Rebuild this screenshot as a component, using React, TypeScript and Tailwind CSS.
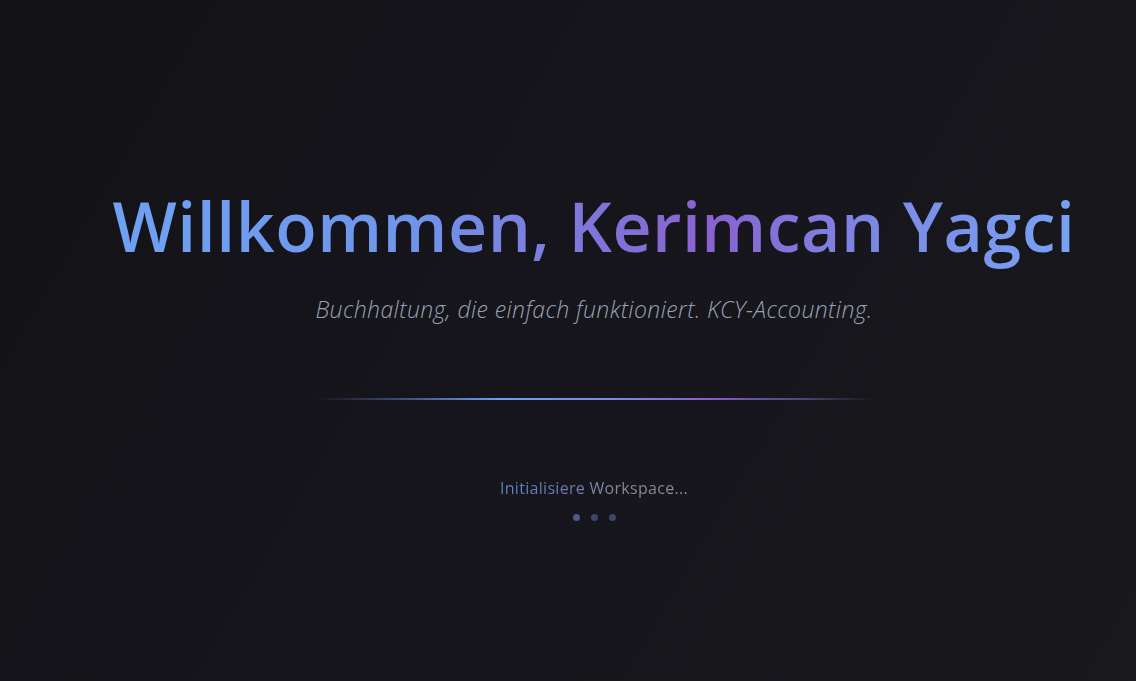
import React from "react";

const FONT = { fontFamily: '"Open Sans", "Noto Sans", sans-serif' };

export default function App() {
  return (
    <div
      className="relative flex h-[681px] w-full flex-col items-center overflow-hidden bg-[#151419] pl-[52px]"
      style={FONT}
    >
      {/* faint diagonal sheen */}
      <div className="pointer-events-none absolute inset-0 bg-[linear-gradient(120deg,#131217_0%,#16151b_45%,#18181d_100%)]" />

      <div className="relative flex flex-col items-center pt-[178px]">
        <h1 className="bg-[linear-gradient(90deg,#6ea1f2_0%,#6f96ea_30%,#8a62d0_62%,#7c8ae6_80%,#78a2f2_100%)] bg-clip-text text-[68px] font-semibold leading-[96px] tracking-[0.5px] text-transparent">
          Willkommen, Kerimcan Yagci
        </h1>

        <p className="mt-[20px] text-[23px] font-light italic leading-[30px] tracking-[0.4px] text-[#9aa1b3]">
          Buchhaltung, die einfach funktioniert. KCY-Accounting.
        </p>

        <div className="mt-[74px] h-[2px] w-[558px] bg-[linear-gradient(90deg,transparent_0%,#3d4a70_15%,#6e9ff6_33%,#7c86e6_55%,#8a5ed2_70%,#4a4670_88%,transparent_100%)]" />

        <div className="mt-[77px] bg-[linear-gradient(90deg,#5b82c8_0%,#6b7cb8_35%,#8a8a9c_60%,#8a8a98_100%)] bg-clip-text text-[16px] leading-[22px] tracking-[0.3px] text-transparent">
          Initialisiere Workspace...
        </div>

        <div className="mt-[15px] flex items-center gap-[11px]">
          <span className="h-[7px] w-[7px] rounded-full bg-[#4b5b8b]" />
          <span className="h-[7px] w-[7px] rounded-full bg-[#3d4868]" />
          <span className="h-[7px] w-[7px] rounded-full bg-[#3d4868]" />
        </div>
      </div>
    </div>
  );
}
